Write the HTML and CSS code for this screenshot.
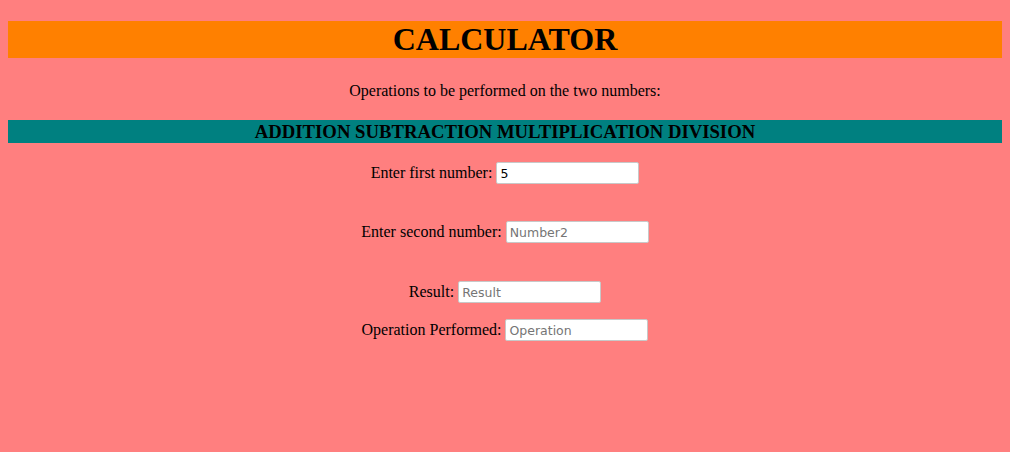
FILE: index.html
```html
<!DOCTYPE html>
<html>
<head>
<meta charset="utf-8">
<link rel="stylesheet" href="styles.css">
</head>
<body class="page">
<h1 class="title">CALCULATOR</h1>
<p class="intro">Operations to be performed on the two numbers:</p>
<h3 class="ops">ADDITION SUBTRACTION MULTIPLICATION DIVISION</h3>
<form class="calc">
  <div class="row row-first"><label class="lbl">Enter first number:</label> <input class="field" type="text" value="5"></div>
  <div class="row row-second"><label class="lbl">Enter second number:</label> <input class="field" type="text" placeholder="Number2"></div>
  <div class="row row-result"><label class="lbl">Result:</label> <input class="field" type="text" placeholder="Result"></div>
  <div class="row row-op"><label class="lbl">Operation Performed:</label> <input class="field" type="text" placeholder="Operation"></div>
</form>
</body>
</html>
```
FILE: styles.css
```css
html, body {
  background: #ff7f7f;
}
html {
  margin: 0;
  padding: 0;
}
.page {
  margin: 0 8px;
  padding-top: 21px;
  font-family: "Liberation Serif", "Times New Roman", serif;
  font-size: 16px;
  color: #000;
}
.title {
  background: #ff8000;
  text-align: center;
  font-size: 32px;
  font-weight: bold;
  margin: 0 0 21px;
  line-height: 37px;
}
.intro {
  text-align: center;
  margin: 0;
  line-height: 18px;
  padding-top: 3px;
}
.ops {
  background: #008080;
  text-align: center;
  font-size: 18.72px;
  margin: 20px 0 0;
  line-height: 23px;
}
.calc {
  display: flex;
  flex-direction: column;
  align-items: center;
  padding-top: 19px;
}
.row {
  display: flex;
  align-items: center;
  gap: 4px;
  height: 22px;
}
.row-second { margin-top: 37px; }
.row-result { margin-top: 38px; }
.row-op { margin-top: 16px; }
.lbl {
  line-height: 18px;
}
.field {
  box-sizing: border-box;
  width: 143px;
  height: 22px;
  border: 1px solid #c8c8c8;
  border-radius: 2px;
  background: #fff;
  padding: 1px 3px;
  font-family: "DejaVu Sans", Verdana, sans-serif;
  font-size: 12.5px;
  color: #000;
  margin: 0;
}
.field::placeholder {
  color: #757575;
}
```
